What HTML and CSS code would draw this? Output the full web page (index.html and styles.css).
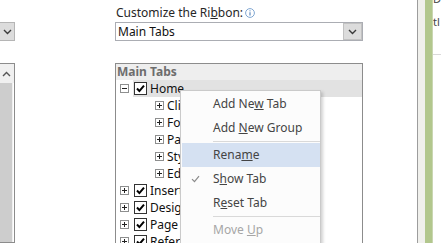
FILE: index.html
```html
<!DOCTYPE html>
<html lang="en">
<head>
    <meta charset="UTF-8">
    <title>Customize the Ribbon</title>
    <link rel="stylesheet" href="styles.css">
</head>
<body>
<div class="window">

    <!-- left column, only its right edge is visible -->
    <div class="side-col">
        <div class="combo stub">
            <span class="combo-btn">
                <svg width="9" height="6" viewBox="0 0 9 6"><path d="M1 1l3.5 3.5L8 1" fill="none" stroke="#3a3a3a" stroke-width="1.4"/></svg>
            </span>
        </div>
        <div class="list-stub">
            <div class="scroll-up">
                <svg width="9" height="6" viewBox="0 0 9 6"><path d="M1 5l3.5-3.5L8 5" fill="none" stroke="#555" stroke-width="1.4"/></svg>
            </div>
            <div class="scroll-track"></div>
        </div>
    </div>

    <div class="main-col">
        <div class="field-label">
            <span>Customize the Ri<u>b</u>bon:</span>
            <svg class="info" width="10" height="10" viewBox="0 0 10 10"><circle cx="5" cy="5" r="4.4" fill="#fff" stroke="#7fa6d1"/><path d="M5 4.2v3.3" stroke="#4f7fb8" stroke-width="1.1"/><circle cx="5" cy="2.8" r=".6" fill="#4f7fb8"/></svg>
        </div>
        <div class="combo">
            <span class="combo-text">Main Tabs</span>
            <span class="combo-btn">
                <svg width="9" height="6" viewBox="0 0 9 6"><path d="M1 1l3.5 3.5L8 1" fill="none" stroke="#3a3a3a" stroke-width="1.4"/></svg>
            </span>
        </div>

        <div class="tree">
            <div class="tree-head">Main Tabs</div>

            <div class="tree-row">
                <svg class="expander" width="9" height="9" viewBox="0 0 9 9"><rect x=".5" y=".5" width="8" height="8" fill="#fff" stroke="#8e8f8f"/><path d="M2 4.5h5" stroke="#222"/></svg>
                <span class="node selected">
                    <svg class="check" width="13" height="13" viewBox="0 0 13 13"><rect x=".5" y=".5" width="12" height="12" fill="#fff" stroke="#333"/><path d="M3 6.5l2.4 2.6L10 3.6" fill="none" stroke="#000" stroke-width="2"/></svg>
                    <span>Home</span>
                </span>
            </div>
            <div class="tree-row child">
                <svg class="expander" width="9" height="9" viewBox="0 0 9 9"><rect x=".5" y=".5" width="8" height="8" fill="#fff" stroke="#8e8f8f"/><path d="M2 4.5h5M4.5 2v5" stroke="#222"/></svg>
                <span class="node">Clipboard</span>
            </div>
            <div class="tree-row child">
                <svg class="expander" width="9" height="9" viewBox="0 0 9 9"><rect x=".5" y=".5" width="8" height="8" fill="#fff" stroke="#8e8f8f"/><path d="M2 4.5h5M4.5 2v5" stroke="#222"/></svg>
                <span class="node">Font</span>
            </div>
            <div class="tree-row child">
                <svg class="expander" width="9" height="9" viewBox="0 0 9 9"><rect x=".5" y=".5" width="8" height="8" fill="#fff" stroke="#8e8f8f"/><path d="M2 4.5h5M4.5 2v5" stroke="#222"/></svg>
                <span class="node">Paragraph</span>
            </div>
            <div class="tree-row child">
                <svg class="expander" width="9" height="9" viewBox="0 0 9 9"><rect x=".5" y=".5" width="8" height="8" fill="#fff" stroke="#8e8f8f"/><path d="M2 4.5h5M4.5 2v5" stroke="#222"/></svg>
                <span class="node">Styles</span>
            </div>
            <div class="tree-row child">
                <svg class="expander" width="9" height="9" viewBox="0 0 9 9"><rect x=".5" y=".5" width="8" height="8" fill="#fff" stroke="#8e8f8f"/><path d="M2 4.5h5M4.5 2v5" stroke="#222"/></svg>
                <span class="node">Editing</span>
            </div>
            <div class="tree-row">
                <svg class="expander" width="9" height="9" viewBox="0 0 9 9"><rect x=".5" y=".5" width="8" height="8" fill="#fff" stroke="#8e8f8f"/><path d="M2 4.5h5M4.5 2v5" stroke="#222"/></svg>
                <span class="node">
                    <svg class="check" width="13" height="13" viewBox="0 0 13 13"><rect x=".5" y=".5" width="12" height="12" fill="#fff" stroke="#333"/><path d="M3 6.5l2.4 2.6L10 3.6" fill="none" stroke="#000" stroke-width="2"/></svg>
                    <span>Insert</span>
                </span>
            </div>
            <div class="tree-row">
                <svg class="expander" width="9" height="9" viewBox="0 0 9 9"><rect x=".5" y=".5" width="8" height="8" fill="#fff" stroke="#8e8f8f"/><path d="M2 4.5h5M4.5 2v5" stroke="#222"/></svg>
                <span class="node">
                    <svg class="check" width="13" height="13" viewBox="0 0 13 13"><rect x=".5" y=".5" width="12" height="12" fill="#fff" stroke="#333"/><path d="M3 6.5l2.4 2.6L10 3.6" fill="none" stroke="#000" stroke-width="2"/></svg>
                    <span>Design</span>
                </span>
            </div>
            <div class="tree-row">
                <svg class="expander" width="9" height="9" viewBox="0 0 9 9"><rect x=".5" y=".5" width="8" height="8" fill="#fff" stroke="#8e8f8f"/><path d="M2 4.5h5M4.5 2v5" stroke="#222"/></svg>
                <span class="node">
                    <svg class="check" width="13" height="13" viewBox="0 0 13 13"><rect x=".5" y=".5" width="12" height="12" fill="#fff" stroke="#333"/><path d="M3 6.5l2.4 2.6L10 3.6" fill="none" stroke="#000" stroke-width="2"/></svg>
                    <span>Page Layout</span>
                </span>
            </div>
            <div class="tree-row">
                <svg class="expander" width="9" height="9" viewBox="0 0 9 9"><rect x=".5" y=".5" width="8" height="8" fill="#fff" stroke="#8e8f8f"/><path d="M2 4.5h5M4.5 2v5" stroke="#222"/></svg>
                <span class="node">
                    <svg class="check" width="13" height="13" viewBox="0 0 13 13"><rect x=".5" y=".5" width="12" height="12" fill="#fff" stroke="#333"/><path d="M3 6.5l2.4 2.6L10 3.6" fill="none" stroke="#000" stroke-width="2"/></svg>
                    <span>References</span>
                </span>
            </div>
        </div>
    </div>

    <!-- edge of the next window -->
    <div class="side-panel">
        <div class="panel-edge"></div>
        <div class="panel-stripe"></div>
        <div class="panel-body">
            <div class="panel-top">Dr</div>
            <div class="panel-line">tl</div>
        </div>
    </div>

    <!-- right-click menu over the tree -->
    <div class="context-menu">
        <div class="menu-item">Add Ne<u>w</u> Tab</div>
        <div class="menu-item">Add <u>N</u>ew Group</div>
        <div class="menu-sep"></div>
        <div class="menu-item hover">Rena<u>m</u>e</div>
        <div class="menu-item">
            <svg class="menu-check" width="9" height="8" viewBox="0 0 9 8"><path d="M1 4.2l2.5 2.5L8 1.2" fill="none" stroke="#8a8a8a" stroke-width="1.2"/></svg>
            S<u>h</u>ow Tab
        </div>
        <div class="menu-item">R<u>e</u>set Tab</div>
        <div class="menu-sep"></div>
        <div class="menu-item disabled">Move <u>U</u>p</div>
    </div>
</div>
</body>
</html>
```

FILE: styles.css
```css
body {
    margin: 0;
    background: #fff;
    font-family: "Noto Sans", "Open Sans", sans-serif;
    font-size: 12px;
    color: #1e1e1e;
}
.window {
    position: relative;
    display: flex;
    width: 441px;
    height: 243px;
    overflow: hidden;
}

/* left column */
.side-col {
    width: 15px;
    padding-top: 22px;
    display: flex;
    flex-direction: column;
}
.list-stub {
    margin-top: 22px;
    flex: 1;
    border: 1px solid #8c8c8c;
    border-left: none;
    display: flex;
    flex-direction: column;
}
.scroll-up {
    height: 19px;
    background: #f0f0f0;
    display: flex;
    align-items: center;
    justify-content: center;
    padding-right: 1px;
}
.scroll-track {
    flex: 1;
    background: #cdcdcd;
    margin-right: 1px;
    border-right: 1px solid #f0f0f0;
}

/* combo boxes */
.combo {
    height: 19px;
    box-sizing: border-box;
    border: 1px solid #abadb3;
    display: flex;
    align-items: center;
    background: #fff;
}
.combo.stub {
    border-left: none;
    border-color: #b5b5b5;
}
.combo-text {
    flex: 1;
    padding-left: 2px;
    color: #111;
}
.combo-btn {
    width: 19px;
    height: 17px;
    box-sizing: border-box;
    background: #dcdcdc;
    border: 1px solid #c2c2c2;
    display: flex;
    align-items: center;
    justify-content: center;
}
.combo.stub .combo-btn {
    width: 14px;
    border: none;
}

/* middle column */
.main-col {
    margin-left: 100px;
    width: 248px;
    display: flex;
    flex-direction: column;
}
.field-label {
    height: 22px;
    box-sizing: border-box;
    padding: 3px 0 0 1px;
    line-height: 16px;
    color: #262626;
    display: flex;
    align-items: center;
    gap: 2px;
    align-self: flex-start;
}
.field-label .info {
    margin-top: 1px;
}
.tree {
    margin-top: 22px;
    flex: 1;
    border: 1px solid #8c8c8c;
    border-bottom: none;
    overflow: hidden;
}
.tree-head {
    height: 16px;
    line-height: 16px;
    padding-left: 1px;
    background: #eeeeee;
    color: #6d6d6d;
    font-weight: bold;
}
.tree-row {
    height: 17px;
    display: flex;
    align-items: center;
    padding-left: 4px;
    white-space: nowrap;
}
.tree-row.child {
    padding-left: 39px;
}
.expander {
    flex-shrink: 0;
    margin-right: 4px;
}
.tree-row.child .expander {
    margin-right: 3px;
}
.node {
    flex: 1;
    height: 17px;
    display: flex;
    align-items: center;
    gap: 3px;
    padding-left: 1px;
    color: #111;
}
.node.selected {
    background: #e2e2e2;
}
.tree-row.child .node {
    padding-left: 0;
}

/* right panel edge */
.side-panel {
    margin-left: auto;
    width: 24px;
    display: flex;
}
.panel-edge {
    width: 7px;
    border-left: 1px solid #9d9d9d;
    background: #f0f0ec;
}
.panel-stripe {
    width: 7px;
    background: #b2c78d;
    border-right: 1px solid #c9d6b1;
}
.panel-body {
    flex: 1;
    background: #fff;
    font-size: 11px;
    color: #444;
    overflow: hidden;
}
.panel-top {
    height: 14px;
    line-height: 6px;
    margin-top: -4px;
}
.panel-line {
    height: 45px;
    line-height: 16px;
    padding-top: 4px;
    box-sizing: border-box;
    border-bottom: 1px solid #dadada;
}

/* context menu */
.context-menu {
    position: absolute;
    left: 180px;
    top: 90px;
    width: 141px;
    padding: 1px 0 1px 1px;
    box-sizing: border-box;
    background: #fcfcfc;
    border: 1px solid #cacaca;
    box-shadow: 2px 2px 3px rgba(0, 0, 0, 0.18);
    color: #444;
}
.menu-item {
    position: relative;
    height: 24px;
    line-height: 24px;
    padding-left: 31px;
}
.menu-item.hover {
    background: #d5e1f2;
}
.menu-item.disabled {
    color: #a6a6a6;
}
.menu-check {
    position: absolute;
    left: 9px;
    top: 8px;
}
.menu-sep {
    height: 3px;
    margin-left: 31px;
    position: relative;
}
.menu-sep::after {
    content: "";
    position: absolute;
    left: 0;
    right: 0;
    top: 1px;
    border-top: 1px solid #d9d9d9;
}
```
